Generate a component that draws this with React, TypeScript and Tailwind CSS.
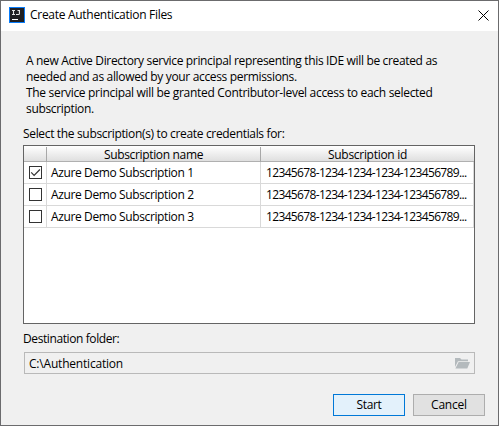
const rows = [
  { name: 'Azure Demo Subscription 1', id: '12345678-1234-1234-1234-123456789...', checked: true },
  { name: 'Azure Demo Subscription 2', id: '12345678-1234-1234-1234-123456789...', checked: false },
  { name: 'Azure Demo Subscription 3', id: '12345678-1234-1234-1234-123456789...', checked: false },
];

function AppIcon() {
  return (
    <svg width="16" height="16" viewBox="0 0 16 16">
      <rect width="16" height="16" fill="#087cfa" />
      <rect x="1" y="1" width="14" height="14" fill="#1f1f22" />
      <path d="M3 3.5h3M4.5 3v5M3 7.5h3M8.5 3.5H11M10.4 3v4.5M7 7.5h3.2" stroke="#e4e4e4" strokeWidth="1.1" fill="none" />
      <path d="M3 12.5h6" stroke="#fff" />
    </svg>
  );
}

function Checkbox({ checked }: { checked: boolean }) {
  return (
    <span className="block size-[13px] border border-[#333] bg-white">
      {checked && (
        <svg className="block" width="11" height="11" viewBox="0 0 11 11" fill="none" stroke="#333" strokeWidth="1.2">
          <path d="M1.2 5.4 4.1 8.3 9.9 2.5" />
        </svg>
      )}
    </span>
  );
}

function FolderIcon() {
  return (
    <svg width="15" height="12" viewBox="0 0 15 12" fill="#b4babd">
      <path d="M0 1h5l1.5 1.5H13V4.2H3L0 10z" />
      <path d="M3.6 5H15L12.3 11.5H0.4z" />
    </svg>
  );
}

export default function App() {
  return (
    <div className="flex h-[426px] w-[499px] flex-col overflow-hidden border border-[#6b6b6d] bg-[#f0f0f0] font-['Open_Sans',sans-serif] text-[12px] leading-4 tracking-[-0.34px] whitespace-nowrap text-black">
      <header className="flex h-[30px] shrink-0 items-start bg-white pt-1.5 pr-[9px] pl-2">
        <AppIcon />
        <h1 className="ml-[5px] tracking-[-0.29px]">Create Authentication Files</h1>
        <svg className="mt-[3px] ml-auto" width="11" height="11" viewBox="0 0 11 11" stroke="#000" strokeWidth="1">
          <path d="M.5.5l10 10M10.5.5l-10 10" />
        </svg>
      </header>

      <main className="flex flex-col pr-[23px] pl-[22px]">
        <div className="mt-[22px] pl-[3px]">
          <p>A new Active Directory service principal representing this IDE will be created as</p>
          <p>needed and as allowed by your access permissions.</p>
          <p className="tracking-[-0.31px]">The service principal will be granted Contributor-level access to each selected</p>
          <p>subscription.</p>
        </div>
        <p className="mt-[9px]">Select the subscription(s) to create credentials for:</p>

        <div className="mt-[3px] h-[179px] w-[452px] border border-[#646464] bg-white">
          <div className="grid h-4 grid-cols-[23px_214px_213px] border-b border-[#b0b0b0] bg-linear-to-b from-white to-[#dfdfdf] text-center">
            <div className="mt-px mb-px border-r border-[#a8a8a8]" />
            <div className="mt-px mb-px border-r border-[#a8a8a8] leading-[15px]">Subscription name</div>
            <div className="mt-px leading-[15px] tracking-[-0.29px]">Subscription id</div>
          </div>
          {rows.map((row) => (
            <div key={row.name} className="grid h-[22px] grid-cols-[23px_214px_213px] border-b border-[#d9d9d9] leading-[22px]">
              <div className="border-r border-[#d9d9d9] pt-1 pl-[5px]">
                <Checkbox checked={row.checked} />
              </div>
              <div className="border-r border-[#d9d9d9] pl-1 tracking-[-0.38px]">{row.name}</div>
              <div className="border-r border-[#d9d9d9] pl-[5px] tracking-[-0.65px]">{row.id}</div>
            </div>
          ))}
        </div>

        <p className="mt-[7px] tracking-[-0.4px]">Destination folder:</p>
        <div className="mt-[5px] ml-px flex h-[22px] w-[451px] items-center justify-between border border-[#b9b9b9] pr-1 pl-1">
          <span className="pt-0.5 tracking-[-0.2px]">C:\Authentication</span>
          <FolderIcon />
        </div>
      </main>

      <footer className="mt-5 flex justify-end gap-2 pr-[13px]">
        <button className="h-[22px] w-[72px] border border-[#0078d7] bg-[#e3f1fb] leading-5">Start</button>
        <button className="h-[22px] w-[72px] border border-[#adadad] bg-[#e1e1e1] leading-5 tracking-[-0.2px]">Cancel</button>
      </footer>
    </div>
  );
}
